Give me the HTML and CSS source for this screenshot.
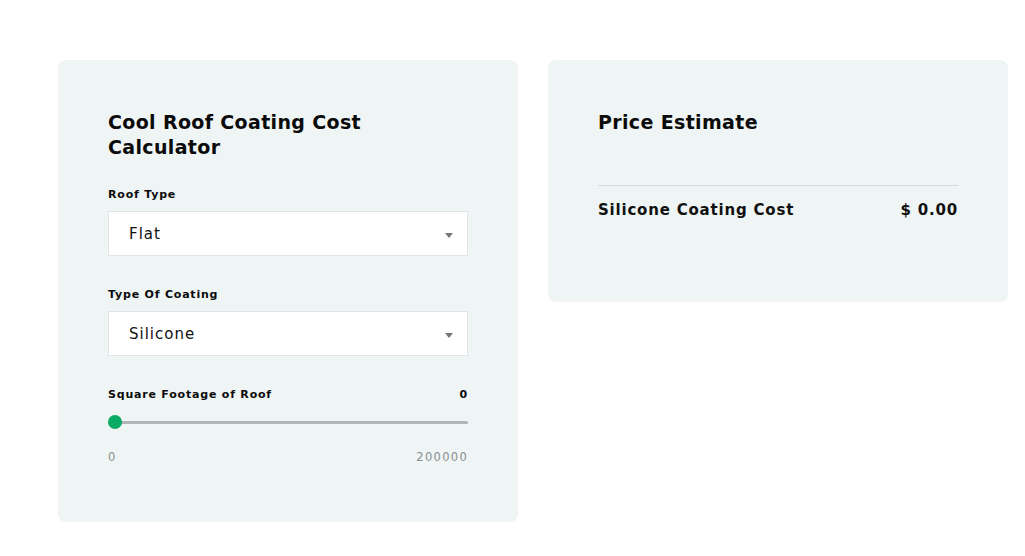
FILE: index.html
```html
<!DOCTYPE html>
<html>
<head>
<meta charset="utf-8">
<link rel="stylesheet" href="styles.css">
</head>
<body>
<div class="page">
  <section class="card calc">
    <h2 class="title">Cool Roof Coating Cost Calculator</h2>
    <div class="field">
      <div class="label">Roof Type</div>
      <div class="select"><span>Flat</span><i class="caret"></i></div>
    </div>
    <div class="field">
      <div class="label">Type Of Coating</div>
      <div class="select"><span>Silicone</span><i class="caret"></i></div>
    </div>
    <div class="field range">
      <div class="label-row"><span class="label">Square Footage of Roof</span><span class="label">0</span></div>
      <div class="slider"><div class="track"></div><div class="thumb"></div></div>
      <div class="range-ends"><span>0</span><span>200000</span></div>
    </div>
  </section>
  <section class="card estimate">
    <h2 class="title">Price Estimate</h2>
    <div class="divider"></div>
    <div class="cost-row"><span>Silicone Coating Cost</span><span>$ 0.00</span></div>
  </section>
</div>
</body>
</html>
```
FILE: styles.css
```css
* { box-sizing: border-box; }
html, body { margin: 0; padding: 0; background: #fff; }
body { font-family: "DejaVu Sans", "Open Sans", sans-serif; color: #111; }
.page {
  display: flex;
  align-items: flex-start;
  gap: 30px;
  padding: 60px 0 0 58px;
}
.card {
  width: 460px;
  background: #eff4f4;
  border-radius: 8px;
  padding: 50px;
}
.calc { height: 462px; }
.estimate { height: 242px; }
.title {
  margin: 0;
  font-size: 19px;
  line-height: 25px;
  font-weight: 700;
  letter-spacing: 0.35px;
  color: #0b0b0b;
}
.calc .title { margin-bottom: 26px; }
.field { margin-bottom: 30px; }
.label {
  display: block;
  font-size: 11px;
  line-height: 18px;
  font-weight: 700;
  letter-spacing: 0.8px;
  color: #0b0b0b;
  margin-bottom: 7px;
}
.select {
  height: 45px;
  background: #fff;
  border: 1px solid #e2e5e5;
  display: flex;
  align-items: center;
  justify-content: space-between;
  padding: 0 14px 0 20px;
  font-size: 15px;
  letter-spacing: 1px;
  color: #111;
}
.caret {
  width: 0; height: 0;
  border-left: 4px solid transparent;
  border-right: 4px solid transparent;
  border-top: 5px solid #777;
  margin-top: 3px;
}
.label-row { display: flex; justify-content: space-between; }
.slider { position: relative; height: 22px; margin-top: 1px; }
.track {
  position: absolute; left: 0; right: 0; top: 9px;
  height: 3px; background: #b2b5b5; border-radius: 2px;
}
.thumb {
  position: absolute; left: 0; top: 3px;
  width: 14px; height: 14px; border-radius: 50%;
  background: #0aab63;
}
.range-ends {
  display: flex; justify-content: space-between;
  margin-top: 14px;
  font-size: 11.5px; line-height: 18px; letter-spacing: 1.3px;
  color: #8a8f8f;
}
.divider { height: 1px; background: #d5dbdb; margin-top: 50px; }
.cost-row {
  display: flex; justify-content: space-between;
  margin-top: 12px;
  font-size: 15px; line-height: 24px; font-weight: 700; letter-spacing: 0.8px;
  color: #111;
}
```
